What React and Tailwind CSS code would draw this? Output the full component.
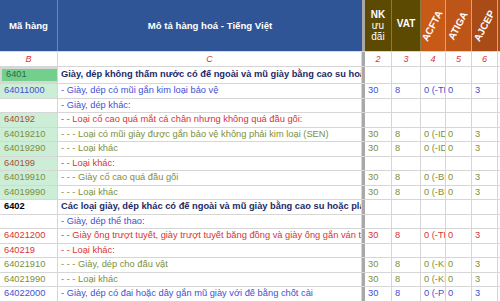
const rows = [
  { code: '6401', desc: 'Giày, dép không thấm nước có đế ngoài và mũ giày bằng cao su hoặc plastic, mũ giày không gắn hoặc lắp ghép với đế', kind: 'head', sel: true },
  { code: '64011000', desc: '- Giày, dép có mũi gắn kim loại bảo vệ', kind: 'blue', green: true, acfta: '0 (-TH)' },
  { code: '', desc: '- Giày, dép khác:', kind: 'blue' },
  { code: '640192', desc: '- - Loại cổ cao quá mắt cá chân nhưng không quá đầu gối:', kind: 'red', green: true, brown: true },
  { code: '64019210', desc: '- - - Loại có mũi giày được gắn bảo vệ không phải kim loại (SEN)', kind: 'olive', green: true, acfta: '0 (-ID)' },
  { code: '64019290', desc: '- - - Loại khác', kind: 'olive', green: true, acfta: '0 (-ID)' },
  { code: '640199', desc: '- - Loại khác:', kind: 'red', green: true, brown: true },
  { code: '64019910', desc: '- - - Giày cổ cao quá đầu gối', kind: 'olive', green: true, acfta: '0 (-BN)' },
  { code: '64019990', desc: '- - - Loại khác', kind: 'olive', green: true, acfta: '0 (-BN)' },
  { code: '6402', desc: 'Các loại giày, dép khác có đế ngoài và mũ giày bằng cao su hoặc plastic', kind: 'head' },
  { code: '', desc: '- Giày, dép thể thao:', kind: 'blue' },
  { code: '64021200', desc: '- - Giày ống trượt tuyết, giày trượt tuyết băng đồng và giày ống gắn ván trượt', kind: 'red', acfta: '0 (-TH)' },
  { code: '640219', desc: '- - Loại khác:', kind: 'red' },
  { code: '64021910', desc: '- - - Giày, dép cho đấu vật', kind: 'olive', acfta: '0 (-KH)' },
  { code: '64021990', desc: '- - - Loại khác', kind: 'olive', acfta: '0 (-KH)' },
  { code: '64022000', desc: '- Giày, dép có đai hoặc dây gắn mũ giày với đế bằng chốt cài', kind: 'blue', acfta: '0 (-PH)' },
];

const textColor = {
  head: 'text-[#1c2a66] font-bold',
  blue: 'text-[#4250d4]',
  red: 'text-[#d83434]',
  olive: 'text-[#7b8f3e]',
};

function Cell({ w, className = '', children }) {
  return (
    <div className={`${w} shrink-0 h-full border-r border-[#d6d6d6] flex items-center overflow-hidden whitespace-nowrap ${className}`}>
      {children}
    </div>
  );
}

function Row({ r }) {
  const c = textColor[r.kind];
  let codeCls = c;
  if (r.sel) codeCls = 'bg-[#72cf8c] text-[#2c6b47] border-2 border-[#2f7a4a]';
  else if (r.green) codeCls = `bg-[#cdeed6] ${r.brown ? 'text-[#a5523a]' : c}`;
  else if (r.kind === 'head') codeCls = 'text-black font-bold';
  return (
    <div className={`flex border-b border-[#d6d6d6] ${r.sel ? 'h-[17px]' : 'h-[14.5px]'}`}>
      <Cell w="w-[58px]" className={`pl-[4px] ${codeCls}`}>{r.code}</Cell>
      <Cell w="w-[304px]" className={`pl-[3px] ${c}`}>{r.desc}</Cell>
      <div className="w-[3px] shrink-0 bg-[#a8a8a8]" />
      <Cell w="w-[27px]" className={`pl-[3px] ${c}`}>{r.acfta ? '30' : ''}</Cell>
      <Cell w="w-[29px]" className={`pl-[3px] ${c}`}>{r.acfta ? '8' : ''}</Cell>
      <Cell w="w-[25px]" className={`pl-[3px] ${c}`}>{r.acfta}</Cell>
      <Cell w="w-[26px]" className={`pl-[2px] ${c}`}>{r.acfta ? '0' : ''}</Cell>
      <Cell w="w-[26px]" className={`pl-[3px] ${c}`}>{r.acfta ? '3' : ''}</Cell>
      <div className="w-[2px] shrink-0" />
    </div>
  );
}

function Slanted({ label, bg }) {
  return (
    <div className={`w-full h-full ${bg} border-r border-[#d9a27a] flex items-center justify-center overflow-hidden`}>
      <span className="-rotate-[62deg] text-white font-bold text-[10px] whitespace-nowrap">{label}</span>
    </div>
  );
}

export default function App() {
  return (
    <div className="w-[500px] h-[302px] overflow-hidden bg-white text-[9.3px] leading-none" style={{ fontFamily: '"Liberation Sans", Arial, sans-serif' }}>
      {/* header */}
      <div className="flex h-[52px] border-b border-[#d6d6d6]">
        <div className="w-[58px] shrink-0 bg-[#2f5597] border-r border-[#6b86bd] flex items-center justify-center text-white font-bold text-[9.6px]">Mã hàng</div>
        <div className="w-[304px] shrink-0 bg-[#2f5597] flex items-center justify-center text-white font-bold text-[9.6px]">Mô tả hàng hoá - Tiếng Việt</div>
        <div className="w-[3px] shrink-0 bg-[#a8a8a8]" />
        <div className="w-[27px] shrink-0 bg-[#5c4a02] border-r border-[#8a7a40] flex flex-col items-center justify-center text-white font-bold leading-[11px] text-[10px]">
          <span>NK</span>
          <span className="font-normal">ưu</span>
          <span className="font-normal">đãi</span>
        </div>
        <div className="w-[29px] shrink-0 bg-[#5c4a02] border-r border-[#8a7a40] flex items-center justify-center text-white font-bold text-[10px] pb-[4px]">VAT</div>
        <div className="w-[25px] shrink-0"><Slanted label="ACFTA" bg="bg-[#c85a17]" /></div>
        <div className="w-[26px] shrink-0"><Slanted label="ATIGA" bg="bg-[#bd5518]" /></div>
        <div className="w-[26px] shrink-0"><Slanted label="AJCEP" bg="bg-[#a84b17]" /></div>
        <div className="w-[2px] shrink-0 bg-[#a84b17]" />
      </div>
      {/* letter row */}
      <div className="flex h-[15px] border-b border-[#d6d6d6] italic text-[9px] text-[#d83434]">
        <Cell w="w-[58px]" className="justify-center">B</Cell>
        <Cell w="w-[304px]" className="justify-center">C</Cell>
        <div className="w-[3px] shrink-0 bg-[#a8a8a8]" />
        <Cell w="w-[27px]" className="justify-center">2</Cell>
        <Cell w="w-[29px]" className="justify-center">3</Cell>
        <Cell w="w-[25px]" className="justify-center">4</Cell>
        <Cell w="w-[26px]" className="justify-center">5</Cell>
        <Cell w="w-[26px]" className="justify-center">6</Cell>
        <div className="w-[2px] shrink-0" />
      </div>
      {rows.map((r, i) => <Row key={i} r={r} />)}
    </div>
  );
}
